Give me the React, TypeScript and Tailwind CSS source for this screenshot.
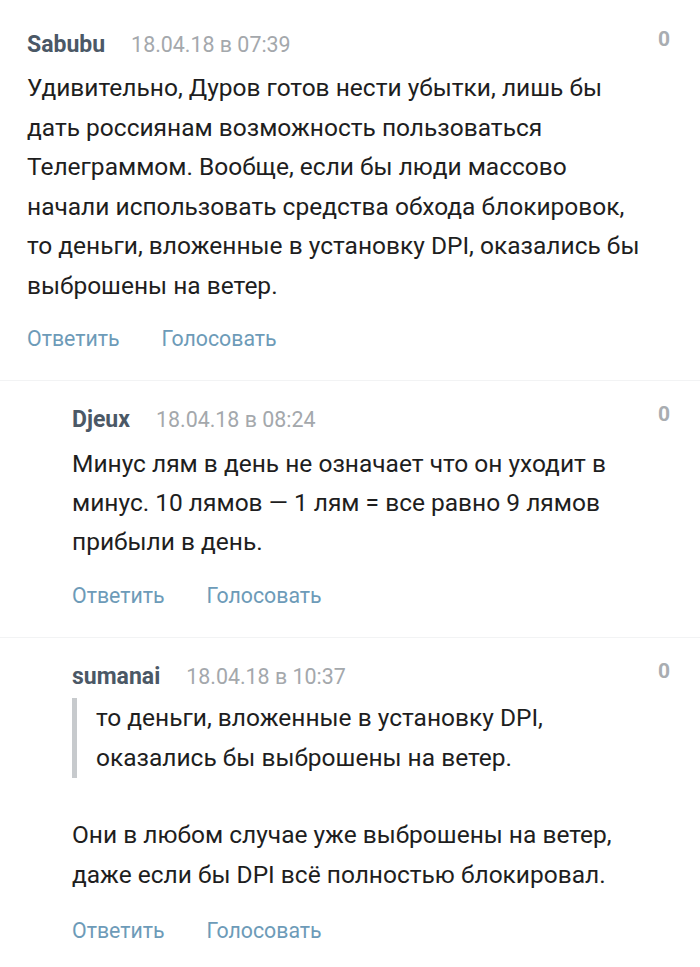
import React from "react";

const font = { fontFamily: "Roboto, 'Noto Sans', sans-serif" };

function Header({ name, date }: { name: string; date: string }) {
  return (
    <div className="flex items-start justify-between">
      <div className="flex h-[30px] items-center">
        <span className="text-[23px] font-bold text-[#4b5866]">{name}</span>
        <span className="ml-[26px] text-[21.4px] text-[#a4a8ac]">{date}</span>
      </div>
      <span className="mt-[-3px] text-[21px] font-bold leading-[24px] text-[#a9adb1]">0</span>
    </div>
  );
}

function Actions() {
  return (
    <div className="flex h-[30px] items-center text-[21.3px] text-[#6d9bb8]">
      <span>Ответить</span>
      <span className="ml-[42px]">Голосовать</span>
    </div>
  );
}

export default function App() {
  return (
    <div className="w-[700px] min-h-[967px] bg-white" style={font}>
      {/* Comment 1 */}
      <div className="border-b border-[#f2f3f4] pb-[26px] pl-[27px] pr-[30px] pt-[30px]">
        <Header name="Sabubu" date="18.04.18 в 07:39" />
        <div className="mt-[8px] pr-[23px] text-[24.5px] leading-[39.5px] text-[#1e1e1e]">
          Удивительно, Дуров готов нести убытки, лишь бы дать россиянам возможность пользоваться
          Телеграммом. Вообще, если бы люди массово начали использовать средства обхода блокировок,
          то деньги, вложенные в установку DPI, оказались бы выброшены на ветер.
        </div>
        <div className="mt-[19px]">
          <Actions />
        </div>
      </div>

      {/* Comment 2 */}
      <div className="border-b border-[#f2f3f4] pb-[26px] pl-[72px] pr-[30px] pt-[24px]">
        <Header name="Djeux" date="18.04.18 в 08:24" />
        <div className="mt-[9px] text-[24.5px] leading-[39px] text-[#1e1e1e]">
          Минус лям в день не означает что он уходит в минус. 10 лямов — 1 лям = все равно 9 лямов
          прибыли в день.
        </div>
        <div className="mt-[20px]">
          <Actions />
        </div>
      </div>

      {/* Comment 3 */}
      <div className="pb-[20px] pl-[72px] pr-[30px] pt-[24px]">
        <Header name="sumanai" date="18.04.18 в 10:37" />
        <div className="mr-[90px] mt-[6px] flex">
          <div className="w-[5px] shrink-0 bg-[#c7cacd]" />
          <div className="pl-[19px] text-[24.5px] leading-[40px] text-[#1e1e1e]">
            то деньги, вложенные в установку DPI, оказались бы выброшены на ветер.
          </div>
        </div>
        <div className="mt-[37px] text-[24.5px] leading-[40px] text-[#1e1e1e]">
          Они в любом случае уже выброшены на ветер, даже если бы DPI всё полностью блокировал.
        </div>
        <div className="mt-[21px]">
          <Actions />
        </div>
      </div>
    </div>
  );
}
